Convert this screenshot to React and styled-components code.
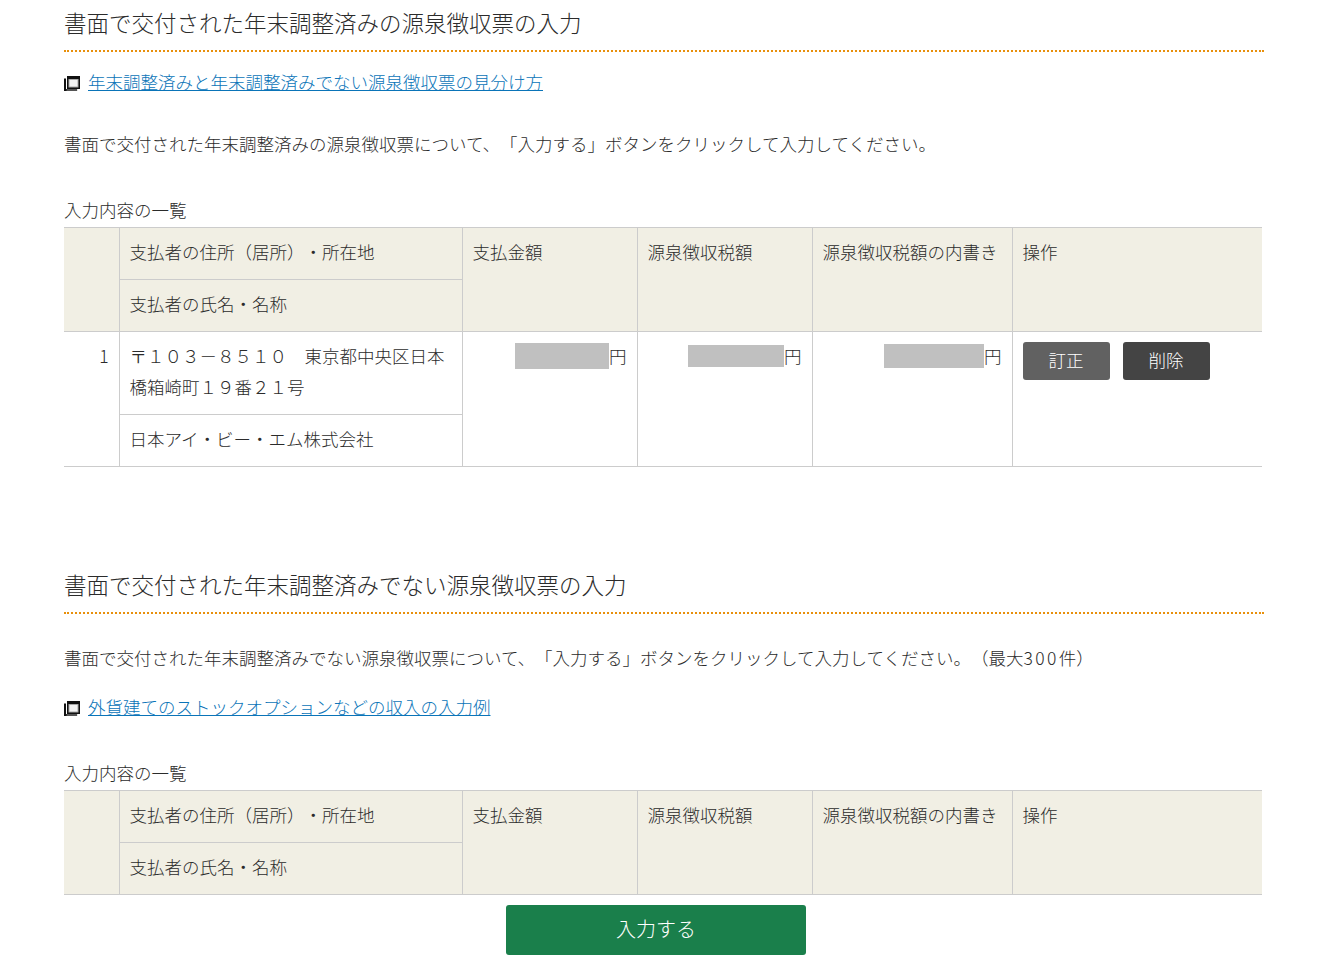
import React from 'react';
import styled, { createGlobalStyle } from 'styled-components';

const GlobalStyle = createGlobalStyle`
  html, body {
    margin: 0;
    padding: 0;
    background: #fff;
  }

  body {
    color: #2b2b2b;
    font-family: "Noto Sans CJK JP", "Noto Sans", sans-serif;
    font-weight: 300;
    font-size: 17.5px;
    line-height: 31px;
    text-spacing-trim: space-all;
  }
`;

const Page = styled.main`
  width: 1200px;
  padding: 0 80px 0 64px;
`;

const Heading = styled.h2`
  margin: ${(p) => (p.$second ? '95px' : '0')} 0 0;
  padding: 3px 0 8px;
  font-size: 22.5px;
  font-weight: 300;
  line-height: 39px;
  border-bottom: 2px dotted #e8900c;
`;

const Text = styled.p`
  margin: ${(p) => p.$top}px 0 0;
`;

const Digits = styled.span`
  letter-spacing: 2.4px;
`;

const LinkRow = styled.p`
  display: flex;
  align-items: center;
  gap: 8px;
  margin: ${(p) => p.$top}px 0 0;
`;

const HelpLink = styled.a`
  color: #0a74b8;
  text-decoration: underline;
`;

const WindowIcon = () => (
  <svg width="16" height="15" viewBox="0 0 16 15" style={{ marginTop: 3 }}>
    <path d="M0 2.5h2V13h11v2H0z" fill="#111" />
    <path d="M2.5 13.5h11v1h-11z" fill="#999" />
    <rect x="3" y="0" width="13" height="13" fill="#111" />
    <rect x="5" y="3.5" width="9" height="7.5" fill="#f4f4f4" stroke="#aaa" strokeWidth="1" />
  </svg>
);

const Caption = styled.div`
  margin: 35px 0 2px;
`;

const Table = styled.table`
  width: 1198px;
  table-layout: fixed;
  border-collapse: collapse;
  color: inherit;
`;

const HeadCell = styled.th`
  padding: 8px 10px 12px;
  background: #f1efe4;
  border: 1px solid #ccc;
  font-weight: 300;
  text-align: left;
  vertical-align: top;
  &:first-child {
    border-left: 0;
  }
  &:last-child {
    border-right: 0;
  }
`;

const Cell = styled.td`
  padding: 8px 10px 12px;
  border: 1px solid #ccc;
  text-align: ${(p) => p.$align || 'left'};
  vertical-align: top;
  &:first-child {
    border-left: 0;
  }
  &:last-child {
    border-right: 0;
  }
`;

const Masked = styled.span`
  display: inline-block;
  width: ${(p) => p.$w}px;
  height: ${(p) => p.$h}px;
  background: #c0c0c0;
  vertical-align: top;
  margin-top: ${(p) => p.$top}px;
`;

const Actions = styled.div`
  display: flex;
  gap: 13px;
  margin-top: 2px;
`;

const SmallButton = styled.button`
  width: 87px;
  height: 38px;
  padding: 0 0 4px;
  border: 0;
  border-radius: 3px;
  background: ${(p) => p.$bg};
  color: #fff;
  font: inherit;
`;

const Footer = styled.div`
  display: flex;
  justify-content: center;
  padding-right: 16px;
  margin-top: 10px;
`;

const SubmitButton = styled.button`
  width: 300px;
  height: 50px;
  padding: 0 0 4px;
  border: 0;
  border-radius: 3px;
  background: #1a7f4b;
  color: #fff;
  font-family: inherit;
  font-weight: 300;
  font-size: 20px;
`;

const Columns = () => (
  <colgroup>
    <col width="55" />
    <col width="343" />
    <col width="175" />
    <col width="175" />
    <col width="200" />
    <col width="250" />
  </colgroup>
);

const TableHead = () => (
  <thead>
    <tr>
      <HeadCell rowSpan={2} />
      <HeadCell>支払者の住所（居所）・所在地</HeadCell>
      <HeadCell rowSpan={2}>支払金額</HeadCell>
      <HeadCell rowSpan={2}>源泉徴収税額</HeadCell>
      <HeadCell rowSpan={2}>源泉徴収税額の内書き</HeadCell>
      <HeadCell rowSpan={2}>操作</HeadCell>
    </tr>
    <tr>
      <HeadCell>支払者の氏名・名称</HeadCell>
    </tr>
  </thead>
);

const App = () => (
  <Page>
    <GlobalStyle />
    <Heading>書面で交付された年末調整済みの源泉徴収票の入力</Heading>
    <LinkRow $top={14}>
      <WindowIcon />
      <HelpLink href="#">年末調整済みと年末調整済みでない源泉徴収票の見分け方</HelpLink>
    </LinkRow>
    <Text $top={31}>書面で交付された年末調整済みの源泉徴収票について、「入力する」ボタンをクリックして入力してください。</Text>
    <Caption>入力内容の一覧</Caption>
    <Table>
      <Columns />
      <TableHead />
      <tbody>
        <tr>
          <Cell rowSpan={2} $align="right">1</Cell>
          <Cell>〒１０３－８５１０　東京都中央区日本橋箱崎町１９番２１号</Cell>
          <Cell rowSpan={2} $align="right"><Masked $w={94} $h={26} $top={3} />円</Cell>
          <Cell rowSpan={2} $align="right"><Masked $w={96} $h={22} $top={5} />円</Cell>
          <Cell rowSpan={2} $align="right"><Masked $w={100} $h={24} $top={4} />円</Cell>
          <Cell rowSpan={2}>
            <Actions>
              <SmallButton $bg="#616161">訂正</SmallButton>
              <SmallButton $bg="#444">削除</SmallButton>
            </Actions>
          </Cell>
        </tr>
        <tr>
          <Cell>日本アイ・ビー・エム株式会社</Cell>
        </tr>
      </tbody>
    </Table>

    <Heading $second>書面で交付された年末調整済みでない源泉徴収票の入力</Heading>
    <Text $top={28}>書面で交付された年末調整済みでない源泉徴収票について、「入力する」ボタンをクリックして入力してください。（最大<Digits>300</Digits>件）</Text>
    <LinkRow $top={18}>
      <WindowIcon />
      <HelpLink href="#">外貨建てのストックオプションなどの収入の入力例</HelpLink>
    </LinkRow>
    <Caption>入力内容の一覧</Caption>
    <Table>
      <Columns />
      <TableHead />
    </Table>
    <Footer>
      <SubmitButton>入力する</SubmitButton>
    </Footer>
  </Page>
);

export default App;
